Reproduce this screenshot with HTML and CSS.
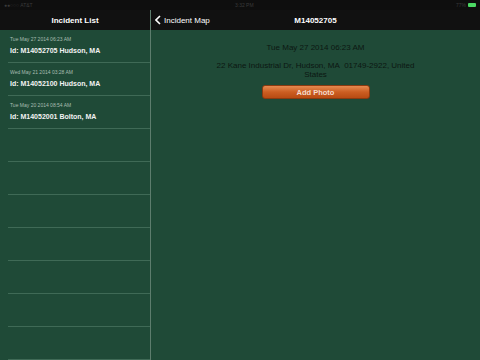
FILE: index.html
```html
<!DOCTYPE html>
<html lang="en">
<head>
  <meta charset="UTF-8">
  <title>Incident List</title>
  <link rel="stylesheet" href="styles.css">
</head>
<body>
  <div class="status">
    <span class="carrier">●●○○○ AT&amp;T</span>
    <span class="time">3:32 PM</span>
    <span class="battery-wrap">77% <span class="battery"></span></span>
  </div>

  <div class="split">
    <div class="master">
      <div class="navbar"><span class="title">Incident List</span></div>
      <ul class="list">
        <li class="row">
          <div class="date">Tue May 27 2014 06:23 AM</div>
          <div class="name">Id: M14052705 Hudson, MA</div>
        </li>
        <li class="row">
          <div class="date">Wed May 21 2014 03:28 AM</div>
          <div class="name">Id: M14052100 Hudson, MA</div>
        </li>
        <li class="row">
          <div class="date">Tue May 20 2014 08:54 AM</div>
          <div class="name">Id: M14052001 Bolton, MA</div>
        </li>
        <li class="row"></li>
        <li class="row"></li>
        <li class="row"></li>
        <li class="row"></li>
        <li class="row"></li>
        <li class="row"></li>
        <li class="row"></li>
      </ul>
    </div>

    <div class="detail">
      <div class="navbar">
        <span class="back">
          <svg width="6" height="10" viewBox="0 0 6 10"><path d="M5 1 L1 5 L5 9" fill="none" stroke="#fff" stroke-width="1.6"/></svg>
          Incident Map
        </span>
        <span class="title">M14052705</span>
      </div>
      <div class="content">
        <p class="when">Tue May 27 2014 06:23 AM</p>
        <p class="address">22 Kane Industrial Dr, Hudson, MA&nbsp; 01749-2922, United States</p>
        <button class="photo">Add Photo</button>
      </div>
    </div>
  </div>
</body>
</html>
```

FILE: styles.css
```css
body {
  margin: 0;
  height: 360px;
  overflow: hidden;
  background: #0e0e0e;
  font-family: 'Liberation Sans', Arial, sans-serif;
  color: #fff;
}

.status {
  display: flex;
  justify-content: space-between;
  align-items: center;
  height: 10px;
  padding: 0 4px;
  font-size: 5px;
  color: #3a3a3a;
  background: #0e0e0e;
}

.battery-wrap {
  display: flex;
  align-items: center;
  gap: 2px;
}

.battery {
  display: inline-block;
  width: 8px;
  height: 4px;
  background: #4cd964;
  border-radius: 1px;
}

.split {
  display: flex;
  height: 350px;
}

.master {
  width: 150px;
  border-right: 1px solid #5d7d6d;
  background: #1f4a37;
}

.detail {
  flex: 1;
  background: #1f4a37;
}

.navbar {
  position: relative;
  display: flex;
  align-items: center;
  justify-content: center;
  height: 20px;
  background: #111;
  font-size: 8px;
  font-weight: bold;
}

.back {
  position: absolute;
  left: 4px;
  top: 5px;
  display: flex;
  align-items: center;
  gap: 3px;
  font-weight: normal;
  font-size: 8px;
}

.list {
  list-style: none;
  margin: 0;
  padding: 0 0 0 8px;
}

.row {
  height: 32px;
  border-bottom: 1px solid #3f6a56;
  padding-left: 2px;
}

.date {
  padding-top: 6px;
  font-size: 5px;
  color: #a9bdb2;
}

.name {
  padding-top: 5px;
  font-size: 7px;
  font-weight: bold;
  color: #f2f2f2;
}

.content {
  display: flex;
  flex-direction: column;
  align-items: center;
  padding-top: 13px;
}

.when {
  margin: 0;
  font-size: 8px;
  color: #0c1712;
}

.address {
  width: 210px;
  margin: 9px 0 0;
  font-size: 8px;
  line-height: 9px;
  text-align: center;
  color: #0c1712;
}

.photo {
  width: 108px;
  height: 14px;
  margin-top: 6px;
  padding: 0;
  border: 1px solid #8a3a10;
  border-radius: 3px;
  background: linear-gradient(#e58a50, #cc5e22 50%, #b84b12);
  color: #f4dccd;
  font-family: inherit;
  font-size: 7.5px;
  font-weight: bold;
}
```
